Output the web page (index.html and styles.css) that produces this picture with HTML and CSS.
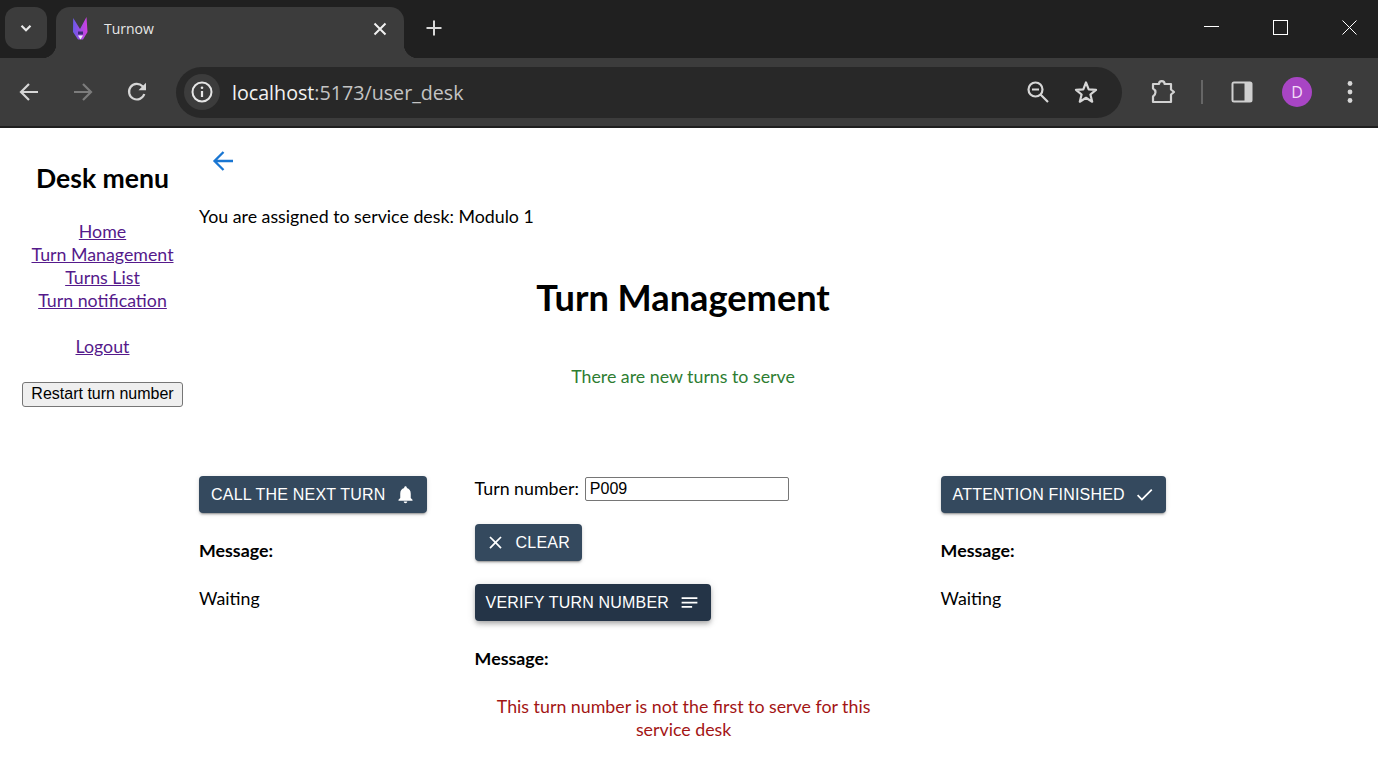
FILE: index.html
```html
<!DOCTYPE html>
<html>

<head>
    <meta charset="UTF-8">
    <title>Turnow</title>
    <link rel="stylesheet" href="styles.css">
</head>

<body>
    <!-- Browser window top -->
    <header class="tabstrip">
        <button class="tabsearch">
            <svg width="16" height="16" viewBox="0 0 16 16"><path d="M3.500 5.800 8 10.200l4.500-4.400" fill="none" stroke="#e8e8e8" stroke-width="2.200"/></svg>
        </button>
        <div class="tab">
            <svg class="favicon" width="18" height="26" viewBox="0 0 18 26">
                <defs>
                    <linearGradient id="fox" x1="0" y1="0" x2="1" y2="0">
                        <stop offset="0" stop-color="#6a5ae8"/>
                        <stop offset="1" stop-color="#d23ee0"/>
                    </linearGradient>
                </defs>
                <path d="M1.200 2 8 13 14.500 1 15.500 16 11 23.500H6L1 16Z" fill="url(#fox)"/>
                <path d="M6 15.500h5v3h-5Z" fill="#3c2a78"/>
                <path d="M6 19.500h5l-2.500 4Z" fill="#f0eef8"/>
            </svg>
            <span class="tab-title">Turnow</span>
            <svg class="tab-close" width="14" height="14" viewBox="0 0 14 14"><path d="M1.500 1.500 12.500 12.500M12.500 1.500 1.500 12.500" stroke="#f0f0f0" stroke-width="2"/></svg>
        </div>
        <svg class="newtab" width="18" height="18" viewBox="0 0 18 18"><path d="M9 1.500v15M1.500 9h15" stroke="#d8d8d8" stroke-width="2"/></svg>
        <div class="winbtns">
            <svg width="15" height="15" viewBox="0 0 15 15"><path d="M0 6.500h15" stroke="#fff"/></svg>
            <svg width="15" height="15" viewBox="0 0 15 15"><rect x="0.500" y="0.500" width="14" height="14" fill="none" stroke="#fff"/></svg>
            <svg width="15" height="15" viewBox="0 0 15 15"><path d="M0.500 0.500 14.500 14.500M14.500 0.500 0.500 14.500" stroke="#fff"/></svg>
        </div>
    </header>

    <div class="toolbar">
        <svg class="navicon" width="22" height="22" viewBox="0 0 22 22"><path d="M20 11H3.500M11 3 3 11l8 8" fill="none" stroke="#d6d6d6" stroke-width="2.200"/></svg>
        <svg class="navicon" width="22" height="22" viewBox="0 0 22 22"><path d="M2 11h16.500M11 3l8 8-8 8" fill="none" stroke="#7c7c7c" stroke-width="2.200"/></svg>
        <svg class="navicon" width="22" height="22" viewBox="0 0 22 22"><path d="M18.300 13A7.800 7.800 0 1 1 16.500 5.300L19 8" fill="none" stroke="#d6d6d6" stroke-width="2.200"/><path d="M20 1.800V9.300H12.500Z" fill="#d6d6d6"/></svg>
        <div class="omnibox">
            <span class="siteinfo">
                <svg width="22" height="22" viewBox="0 0 22 22"><circle cx="11" cy="11" r="9.500" fill="none" stroke="#e6e6e6" stroke-width="2"/><path d="M11 10v6" stroke="#e6e6e6" stroke-width="2.200"/><circle cx="11" cy="6.800" r="1.300" fill="#e6e6e6"/></svg>
            </span>
            <span class="url"><span class="url-host">localhost</span>:5173/user_desk</span>
            <svg class="zoomicon" width="24" height="24" viewBox="0 0 24 24"><circle cx="9.500" cy="9.500" r="7" fill="none" stroke="#d6d6d6" stroke-width="2.200"/><path d="M14.500 14.500 22 22M6 9.500h7" stroke="#d6d6d6" stroke-width="2.200"/></svg>
            <svg class="staricon" width="26" height="26" viewBox="0 0 26 26"><path d="M13 3.500 15.700 10.300 23 10.800 17.400 15.500 19.200 22.700 13 18.800 6.800 22.700 8.600 15.500 3 10.800 10.300 10.300Z" fill="none" stroke="#d6d6d6" stroke-width="2.200" stroke-linejoin="round"/></svg>
        </div>
        <svg class="exticon" width="26" height="26" viewBox="0 0 26 26"><path d="M4 5H10a2.800 2.800 0 0 1 5.600 0H22V10.500L25 13l-3 2.500V23H4V17.500q2.500-1.800 2.500-4.200T4 9.500Z" fill="none" stroke="#d2d2d2" stroke-width="2.200" stroke-linejoin="round"/></svg>
        <span class="toolsep"></span>
        <svg class="sideicon" width="24" height="24" viewBox="0 0 24 24"><rect x="1.500" y="1.500" width="21" height="21" rx="2.500" fill="#cfcfcf"/><rect x="3.500" y="3.500" width="11" height="17" fill="#3c3c3c"/></svg>
        <span class="avatar">D</span>
        <svg class="menuicon" width="6" height="24" viewBox="0 0 6 24"><circle cx="3" cy="3.500" r="2.400" fill="#d6d6d6"/><circle cx="3" cy="12" r="2.400" fill="#d6d6d6"/><circle cx="3" cy="20.500" r="2.400" fill="#d6d6d6"/></svg>
    </div>

    <div class="page">
        <aside class="sidebar">
            <h2>Desk menu</h2>
            <ul class="desk-links">
                <li><a href="#">Home</a></li>
                <li><a href="#">Turn Management</a></li>
                <li><a href="#">Turns List</a></li>
                <li><a href="#">Turn notification</a></li>
            </ul>
            <a class="logout" href="#">Logout</a>
            <button class="restart">Restart turn number</button>
        </aside>

        <main class="content">
            <svg class="backarrow" width="24" height="24" viewBox="0 0 24 24"><path d="M22 12H4M12.500 3 3.500 12l9 9" fill="none" stroke="#1976d2" stroke-width="2.300"/></svg>
            <p class="assigned">You are assigned to service desk: Modulo 1</p>
            <h1>Turn Management</h1>
            <p class="status">There are new turns to serve</p>

            <div class="columns">
                <section class="col">
                    <button class="mui-btn">CALL THE NEXT TURN
                        <svg width="21" height="21" viewBox="0 0 24 24"><path fill="#fff" d="M12 22c1.100 0 2-.9 2-2h-4c0 1.100.9 2 2 2m6-6v-5c0-3.070-1.640-5.640-4.500-6.320V4c0-.83-.67-1.500-1.500-1.500s-1.500.67-1.500 1.500v.68C7.630 5.360 6 7.920 6 11v5l-2 2v1h16v-1z"/></svg>
                    </button>
                    <p class="msg-label">Message:</p>
                    <p class="msg-text">Waiting</p>
                </section>

                <section class="col col-verify">
                    <div class="turn-field">
                        <label for="turn">Turn number:</label>
                        <input type="text" id="turn" value="P009">
                    </div>
                    <button class="mui-btn clear-btn">
                        <svg width="21" height="21" viewBox="0 0 24 24"><path fill="#fff" d="M19 6.410 17.590 5 12 10.590 6.410 5 5 6.410 10.590 12 5 17.590 6.410 19 12 13.410 17.590 19 19 17.590 13.410 12z"/></svg>
                        CLEAR
                    </button>
                    <button class="mui-btn verify-btn">VERIFY TURN NUMBER
                        <svg width="21" height="21" viewBox="0 0 24 24"><path fill="#fff" d="M3 18h12v-2H3zM3 6v2h18V6zm0 7h18v-2H3z"/></svg>
                    </button>
                    <p class="msg-label">Message:</p>
                    <p class="msg-error">This turn number is not the first to serve for this service desk</p>
                </section>

                <section class="col">
                    <button class="mui-btn">ATTENTION FINISHED
                        <svg width="21" height="21" viewBox="0 0 24 24"><path fill="#fff" d="M9 16.170 4.830 12l-1.420 1.410L9 19 21 7l-1.410-1.410z"/></svg>
                    </button>
                    <p class="msg-label">Message:</p>
                    <p class="msg-text">Waiting</p>
                </section>
            </div>
        </main>
    </div>
</body>

</html>
```

FILE: styles.css
```css
* {
    box-sizing: border-box;
}

body {
    margin: 0;
    background-color: #fff;
    color: #000;
    font-family: "Lato", "Open Sans", sans-serif;
    font-size: 17.8px;
    line-height: 23px;
    overflow: hidden;
}

/* Browser tab strip */
.tabstrip {
    height: 58px;
    background-color: #202020;
    display: flex;
    align-items: flex-start;
    padding: 7px 0 0 5px;
}

.tabsearch {
    width: 42px;
    height: 42px;
    border: none;
    border-radius: 12px;
    background-color: #3c3c3c;
    display: flex;
    align-items: center;
    justify-content: center;
    padding: 0;
}

.tab {
    position: relative;
    width: 348px;
    height: 51px;
    margin-left: 9px;
    background-color: #3c3c3c;
    border-radius: 14px 14px 0 0;
    display: flex;
    align-items: center;
    padding: 0 17px 8px 16px;
}

.tab::before,
.tab::after {
    content: "";
    position: absolute;
    bottom: 0;
    width: 14px;
    height: 14px;
}

.tab::before {
    left: -14px;
    background: radial-gradient(circle at 0 0, transparent 14px, #3c3c3c 14.5px);
}

.tab::after {
    right: -14px;
    background: radial-gradient(circle at 100% 0, transparent 14px, #3c3c3c 14.5px);
}

.tab-title {
    margin-left: 14px;
    color: #e8e8e8;
    font-family: "Open Sans", sans-serif;
    font-size: 14px;
    flex: 1;
}

.newtab {
    margin: 12px 0 0 21px;
}

.winbtns {
    margin-left: auto;
    display: flex;
    gap: 54px;
    padding: 13px 21px 0 0;
}

/* Browser toolbar */
.toolbar {
    height: 70px;
    background-color: #3c3c3c;
    border-bottom: 2px solid #1f1f1f;
    display: flex;
    align-items: center;
    padding: 0 0 0 18px;
}

.navicon {
    margin-right: 32px;
}

.navicon:nth-child(3) {
    margin-right: 28px;
}

.omnibox {
    width: 946px;
    height: 51px;
    border-radius: 26px;
    background-color: #282828;
    display: flex;
    align-items: center;
    padding: 0 23px 0 8px;
}

.siteinfo {
    width: 36px;
    height: 36px;
    border-radius: 50%;
    background-color: #3c3c3c;
    display: flex;
    align-items: center;
    justify-content: center;
}

.url {
    margin-left: 12px;
    color: #c4c4c4;
    font-family: "Open Sans", sans-serif;
    font-size: 19.66px;
    flex: 1;
}

.url-host {
    color: #f2f2f2;
}

.zoomicon {
    margin-right: 23px;
}

.exticon {
    margin-left: 27px;
}

.toolsep {
    width: 2px;
    height: 24px;
    margin-left: 26px;
    background-color: #666;
}

.sideicon {
    margin-left: 27px;
}

.avatar {
    width: 30px;
    height: 30px;
    margin-left: 28px;
    border-radius: 50%;
    background-color: #a845c4;
    color: #f4dcf8;
    font-family: "Open Sans", sans-serif;
    font-size: 16px;
    line-height: 30px;
    text-align: center;
}

.menuicon {
    margin-left: 35px;
}

/* Page */
.page {
    display: flex;
    align-items: flex-start;
}

.sidebar {
    width: 199px;
    padding: 0 6px 0 12px;
    text-align: center;
}

.sidebar h2 {
    margin: 35px 0 27px;
    font-size: 26.6px;
    line-height: 30px;
    font-weight: 700;
}

.desk-links {
    list-style: none;
    margin: 0 0 23px;
    padding: 0;
}

a {
    color: #551a8b;
}

.logout {
    display: block;
}

.restart {
    margin-top: 24px;
    width: 161px;
    height: 25px;
    padding: 0 0 1px;
    background-color: #efefef;
    border: 1px solid #767676;
    border-radius: 3px;
    color: #000;
    font-family: "Liberation Sans", sans-serif;
    font-size: 16px;
}

/* Main content */
.content {
    width: 968px;
}

.backarrow {
    display: block;
    margin: 21px 0 0 12px;
}

.assigned {
    margin: 32px 0 0;
}

.content h1 {
    margin: 48px 0 0;
    font-size: 36.2px;
    line-height: 42px;
    font-weight: 700;
    text-align: center;
}

.status {
    margin: 47px 0 0;
    color: #2e7d32;
    text-align: center;
}

.columns {
    display: flex;
    gap: 48px;
    margin-top: 88px;
}

.col {
    flex: none;
}

.col-verify {
    width: 418px;
}

.mui-btn {
    display: flex;
    align-items: center;
    gap: 9px;
    height: 37px;
    padding: 0 11px 0 12px;
    background-color: #34495e;
    border: none;
    border-radius: 4px;
    box-shadow: 0 3px 1px -2px rgba(0, 0, 0, 0.2), 0 2px 2px 0 rgba(0, 0, 0, 0.14), 0 1px 5px 0 rgba(0, 0, 0, 0.12);
    color: #fff;
    font-family: "Liberation Sans", sans-serif;
    font-size: 16px;
    letter-spacing: 0.2px;
    white-space: nowrap;
}

.turn-field {
    display: flex;
    align-items: center;
    gap: 6px;
    height: 25px;
}

.turn-field input {
    width: 204px;
    height: 24px;
    padding: 1px 4px;
    border: 1px solid #767676;
    border-radius: 2px;
    font-family: "Liberation Sans", sans-serif;
    font-size: 16px;
}

.clear-btn {
    margin-top: 23px;
    gap: 10px;
    padding: 0 12px 0 10px;
}

.verify-btn {
    margin-top: 23px;
    gap: 10px;
    padding: 0 11px;
    background-color: #243447;
    box-shadow: 0 2px 4px -1px rgba(0, 0, 0, 0.2), 0 4px 5px 0 rgba(0, 0, 0, 0.14), 0 1px 10px 0 rgba(0, 0, 0, 0.12);
}

.msg-label {
    margin: 26px 0 0;
    font-weight: 700;
}

.msg-text {
    margin: 25px 0 0;
}

.msg-error {
    margin: 25px 0 0;
    color: #a31515;
    text-align: center;
}
```
